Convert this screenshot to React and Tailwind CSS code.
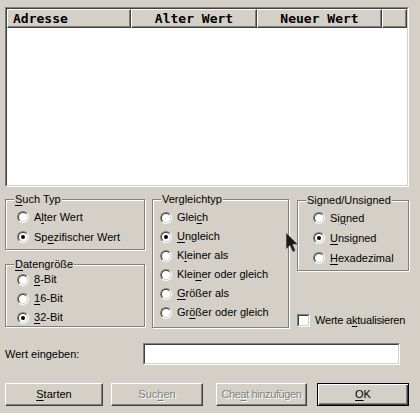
import React from "react";

const FONT = { fontFamily: '"Liberation Sans", Arial, sans-serif' };

function Acc({ text, at }) {
  if (at === undefined || at < 0) return <>{text}</>;
  return (
    <>
      {text.slice(0, at)}
      <u className="underline-offset-[2px]">{text[at]}</u>
      {text.slice(at + 1)}
    </>
  );
}

function Radio({ checked }) {
  return (
    <span className="w-[12px] h-[12px] shrink-0 rounded-full border border-t-[#808080] border-l-[#808080] border-b-white border-r-white">
      <span className="w-full h-full rounded-full border border-t-[#404040] border-l-[#404040] border-b-[#d4d0c8] border-r-[#d4d0c8] bg-white flex items-center justify-center">
        {checked && <span className="w-[4px] h-[4px] rounded-full bg-black" />}
      </span>
    </span>
  );
}

function RadioRow({ text, at, checked, h = "h-[20px]" }) {
  return (
    <div className={`flex items-center gap-[5px] whitespace-nowrap ${h}`}>
      <Radio checked={checked} />
      <span className="leading-none">
        <Acc text={text} at={at} />
      </span>
    </div>
  );
}

function Group({ title, at, className, children }) {
  return (
    <div
      className={`relative border border-[#808080] shadow-[1px_1px_0_#fff,inset_1px_1px_0_#fff] ${className}`}
    >
      <span className="absolute left-[8px] top-[-7px] h-[13px] px-[1px] bg-[#d4d0c8] leading-[13px] whitespace-nowrap">
        <Acc text={title} at={at} />
      </span>
      {children}
    </div>
  );
}

function HeaderCell({ children, className }) {
  return (
    <div
      className={`h-full flex items-center border-t border-l border-t-white border-l-white border-r border-b border-r-[#404040] border-b-[#404040] shadow-[inset_-1px_-1px_0_#808080] ${className}`}
    >
      {children}
    </div>
  );
}

function Button({ text, at, width, disabled, isDefault, tight }) {
  const frame = isDefault
    ? "border border-black shadow-[inset_1px_1px_0_#fff,inset_-1px_-1px_0_#404040,inset_-2px_-2px_0_#808080]"
    : "border border-t-white border-l-white border-b-[#404040] border-r-[#404040] shadow-[inset_-1px_-1px_0_#808080]";
  return (
    <div
      className={`h-[23px] ${width} ${frame} flex items-center justify-center whitespace-nowrap ${
        disabled ? "text-[#808080] [text-shadow:1px_1px_0_#fff]" : "text-black"
      } ${tight ? "tracking-[-0.4px]" : ""}`}
    >
      <span className="leading-none">
        <Acc text={text} at={at} />
      </span>
    </div>
  );
}

export default function App() {
  return (
    <div
      className="relative w-[420px] h-[413px] bg-[#d4d0c8] text-[11px] text-black overflow-hidden"
      style={FONT}
    >
      {/* result list */}
      <div className="ml-[5px] pt-[7px]">
        <div className="w-[404px] h-[180px] border border-t-[#808080] border-l-[#808080] border-b-white border-r-white">
          <div className="w-full h-full border border-t-[#404040] border-l-[#404040] border-b-[#d4d0c8] border-r-[#d4d0c8] bg-white">
            <div
              className="flex h-[19px] bg-[#d4d0c8] font-bold text-[13px]"
              style={{ fontFamily: '"DejaVu Sans Mono", monospace' }}
            >
              <HeaderCell className="w-[124px] pl-[5px]">Adresse</HeaderCell>
              <HeaderCell className="w-[126px] justify-center">Alter Wert</HeaderCell>
              <HeaderCell className="w-[125px] justify-center">Neuer Wert</HeaderCell>
              <HeaderCell className="flex-1" />
            </div>
          </div>
        </div>
      </div>

      {/* option groups */}
      <div className="flex ml-[5px] mt-[12px]">
        <div className="w-[140px] flex flex-col gap-[14px]">
          <Group title="Such Typ" at={0} className="h-[51px] pt-[7px] pl-[11px]">
            <RadioRow text="Alter Wert" at={1} />
            <RadioRow text="Spezifischer Wert" at={2} checked />
          </Group>
          <Group title="Datengröße" at={0} className="h-[63px] pt-[5px] pl-[11px]">
            <RadioRow text="8-Bit" at={0} h="h-[19px]" />
            <RadioRow text="16-Bit" at={0} h="h-[19px]" />
            <RadioRow text="32-Bit" at={0} h="h-[19px]" checked />
          </Group>
        </div>

        <Group title="Vergleichtyp" className="ml-[7px] w-[137px] h-[129px] pt-[8px] pl-[7px]">
          <RadioRow text="Gleich" at={4} h="h-[19px]" />
          <RadioRow text="Ungleich" at={0} h="h-[19px]" checked />
          <RadioRow text="Kleiner als" at={1} h="h-[19px]" />
          <RadioRow text="Kleiner oder gleich" at={4} h="h-[19px]" />
          <RadioRow text="Größer als" at={0} h="h-[19px]" />
          <RadioRow text="Größer oder gleich" at={2} h="h-[19px]" />
        </Group>

        <div className="ml-[8px] mt-[1px] w-[112px] flex flex-col">
          <Group title="Signed/Unsigned" className="h-[71px] pt-[7px] pl-[15px]">
            <RadioRow text="Signed" at={2} />
            <RadioRow text="Unsigned" at={0} checked />
            <RadioRow text="Hexadezimal" at={0} />
          </Group>
          <div className="mt-[43px] flex items-center gap-[5px] whitespace-nowrap">
            <span className="w-[13px] h-[13px] shrink-0 border border-t-[#808080] border-l-[#808080] border-b-white border-r-white">
              <span className="block w-full h-full border border-t-[#404040] border-l-[#404040] border-b-[#d4d0c8] border-r-[#d4d0c8] bg-white" />
            </span>
            <span className="leading-none tracking-[-0.2px]">
              <Acc text="Werte aktualisieren" at={7} />
            </span>
          </div>
        </div>
      </div>

      {/* value input */}
      <div className="flex items-center ml-[5px] mt-[15px]">
        <span className="w-[138px] leading-none">Wert eingeben:</span>
        <div className="w-[257px] h-[22px] border border-t-[#808080] border-l-[#808080] border-b-white border-r-white">
          <div className="w-full h-full border border-t-[#404040] border-l-[#404040] border-b-[#d4d0c8] border-r-[#d4d0c8] bg-white" />
        </div>
      </div>

      {/* buttons */}
      <div className="flex ml-[5px] mt-[18px]">
        <Button text="Starten" at={0} width="w-[98px]" />
        <div className="ml-[8px]">
          <Button text="Suchen" at={3} width="w-[92px]" disabled />
        </div>
        <div className="ml-[13px]">
          <Button text="Cheat hinzufügen" at={3} width="w-[91px]" disabled tight />
        </div>
        <div className="ml-[10px]">
          <Button text="OK" at={0} width="w-[92px]" isDefault />
        </div>
      </div>

      {/* mouse pointer */}
      <svg
        className="absolute left-[286px] top-[233px]"
        width="12"
        height="19"
        viewBox="0 0 12 19"
      >
        <path d="M0.5 0.5 L0.5 15.5 L4 12 L7 18.5 L9 17.5 L6.2 11 L11 11 Z" fill="#1a1a1a" stroke="#3a3a3a" strokeWidth="0.6" />
      </svg>
    </div>
  );
}
